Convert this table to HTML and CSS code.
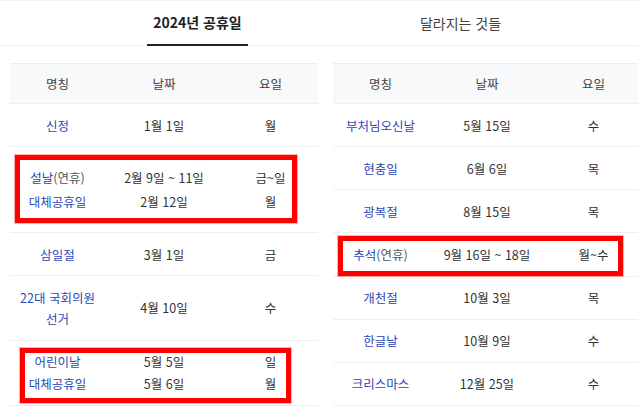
FILE: index.html
```html
<!DOCTYPE html>
<html lang="ko">
<head>
  <meta charset="UTF-8">
  <meta name="viewport" content="width=device-width, initial-scale=1.0">
  <title>2024년 공휴일</title>
  <link rel="stylesheet" href="styles.css">
</head>
<body>
  <nav class="tabs">
    <div class="tab active"><span>2024년 공휴일</span></div>
    <div class="tab"><span>달라지는 것들</span></div>
  </nav>

  <div class="tables">
    <table class="holidays">
      <colgroup><col class="c-name"><col class="c-date"><col class="c-day"></colgroup>
      <thead>
        <tr><th>명칭</th><th>날짜</th><th>요일</th></tr>
      </thead>
      <tbody>
        <tr><td class="name">신정</td><td>1월 1일</td><td>월</td></tr>
        <tr class="pair">
          <td class="name">설날<span class="sub">(연휴)</span><br>대체공휴일</td>
          <td>2월 9일 ~ 11일<br>2월 12일</td>
          <td>금~일<br>월</td>
        </tr>
        <tr><td class="name">삼일절</td><td>3월 1일</td><td>금</td></tr>
        <tr class="wrap"><td class="name">22대 국회의원<br>선거</td><td>4월 10일</td><td>수</td></tr>
        <tr class="pair2">
          <td class="name">어린이날<br>대체공휴일</td>
          <td>5월 5일<br>5월 6일</td>
          <td>일<br>월</td>
        </tr>
      </tbody>
    </table>

    <table class="holidays">
      <colgroup><col class="c-name"><col class="c-date"><col class="c-day"></colgroup>
      <thead>
        <tr><th>명칭</th><th>날짜</th><th>요일</th></tr>
      </thead>
      <tbody>
        <tr><td class="name">부처님오신날</td><td>5월 15일</td><td>수</td></tr>
        <tr><td class="name">현충일</td><td>6월 6일</td><td>목</td></tr>
        <tr><td class="name">광복절</td><td>8월 15일</td><td>목</td></tr>
        <tr><td class="name">추석<span class="sub">(연휴)</span></td><td>9월 16일 ~ 18일</td><td>월~수</td></tr>
        <tr><td class="name">개천절</td><td>10월 3일</td><td>목</td></tr>
        <tr><td class="name">한글날</td><td>10월 9일</td><td>수</td></tr>
        <tr><td class="name">크리스마스</td><td>12월 25일</td><td>수</td></tr>
      </tbody>
    </table>

    <!-- annotation boxes drawn over the tables -->
    <div class="mark mark-seol"></div>
    <div class="mark mark-kids"></div>
    <div class="mark mark-chuseok"></div>
  </div>
</body>
</html>
```

FILE: styles.css
```css
body {
  margin: 0;
  font-family: "Noto Sans CJK KR", "Noto Sans", sans-serif;
  background: #fff;
  color: #333;
  overflow: hidden;
}

.tabs {
  display: flex;
  justify-content: center;
  padding-left: 20px;
  height: 44px;
  border-top: 1px solid #eef0f3;
  border-bottom: 1px solid #eceef0;
}
.tab {
  width: 263px;
  text-align: center;
}
.tab span {
  display: inline-block;
  box-sizing: border-box;
  height: 45px;
  margin-bottom: -1px;
  padding: 0 6px;
  line-height: 44px;
  font-size: 14px;
  color: #444;
}
.tab.active span {
  font-weight: bold;
  color: #222;
  line-height: 43px;
  border-bottom: 2px solid #222;
}

.tables {
  position: relative;
  display: flex;
  gap: 15px;
  padding-left: 10px;
  margin-top: 17px;
}

.holidays {
  flex: none;
  width: 308px;
  border-collapse: collapse;
  table-layout: fixed;
  font-size: 12.5px;
  text-align: center;
}
.c-name { width: 95px; }
.c-date { width: 118px; }
.c-day { width: 95px; }

.holidays th {
  padding: 9px 0;
  line-height: 21px;
  font-weight: normal;
  color: #444;
  background: #f8f9fa;
  border-top: 1px solid #eaecef;
  border-bottom: 1px solid #eeeff1;
}
.holidays td {
  padding: 10.5px 0;
  line-height: 21px;
  color: #333;
  border-bottom: 1px solid #efefef;
  vertical-align: middle;
}
.holidays td.name {
  color: #2a48b5;
}
.holidays .sub {
  color: #555;
}

.holidays tr.pair td {
  padding: 18.5px 0;
  line-height: 24px;
}
.holidays tr.wrap td {
  line-height: 21.5px;
}
.holidays tr.pair2 td {
  padding: 10px 0;
  line-height: 22px;
}

.mark {
  position: absolute;
  box-sizing: border-box;
  border: 5px solid #ff0000;
  box-shadow: 0 0 0 1px rgba(255, 0, 0, 0.3);
}
.mark-seol {
  left: 15px;
  top: 92px;
  width: 282px;
  height: 68px;
}
.mark-kids {
  left: 20px;
  top: 285px;
  width: 271px;
  height: 55px;
}
.mark-chuseok {
  left: 338px;
  top: 173px;
  width: 285px;
  height: 40px;
}
```
